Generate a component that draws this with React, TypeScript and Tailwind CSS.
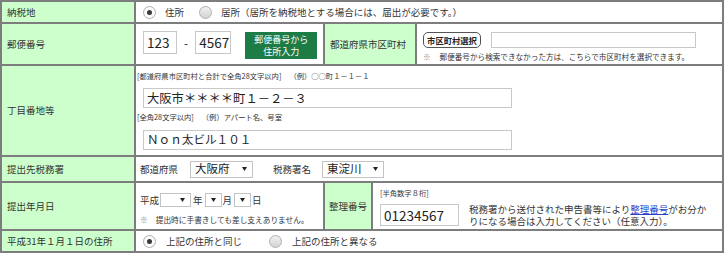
import React from 'react';

const line = 'border-[#7d7d7d]';

const Radio = ({ checked }: { checked?: boolean }) => (
	<span
		className={`flex h-[13px] w-[13px] shrink-0 items-center justify-center rounded-full border border-[#b0b0b0] ${
			checked ? 'bg-[#fbfbfb]' : 'bg-gradient-to-b from-[#f0f0f0] to-[#d4d4d4]'
		}`}
	>
		{checked && <span className="h-[5px] w-[5px] rounded-full bg-[#3a3a3a]" />}
	</span>
);

const Arrow = () => (
	<svg width="5" height="4" viewBox="0 0 5 4" className="shrink-0">
		<path d="M0 0h5L2.5 4z" fill="#222" />
	</svg>
);

const Select = ({ value, className }: { value?: string; className: string }) => (
	<div className={`flex items-center justify-between border border-[#c4c4c4] bg-white pr-[5px] ${className}`}>
		<span className="pl-[4px] text-[11.5px] leading-none text-[#222]">{value}</span>
		<Arrow />
	</div>
);

const Label = ({ children, w }: { children: React.ReactNode; w: string }) => (
	<div className={`flex shrink-0 items-center bg-[#ccffcc] pl-[5px] text-[9.5px]`}>
		<span className={w}>{children}</span>
	</div>
);

const Input = ({ value, className }: { value?: string; className: string }) => (
	<div className={`flex items-center border border-[#c8c8c8] bg-white pl-[3px] text-[#222] ${className}`}>{value}</div>
);

export default function App() {
	return (
		<div className="bg-white">
			<div className={`w-[724px] border-2 ${line} font-['Noto_Sans_CJK_JP',sans-serif] text-[#333]`}>
				{/* 納税地 */}
				<div className="flex h-[20px]">
					<Label w="w-[127px]">納税地</Label>
					<div className={`flex flex-1 items-center border-l-2 ${line} pl-[7px] text-[9.5px]`}>
						<Radio checked />
						<span className="ml-[9px]">住所</span>
						<span className="ml-[15px]">
							<Radio />
						</span>
						<span className="ml-[9px]">居所（居所を納税地とする場合には、届出が必要です。）</span>
					</div>
				</div>

				{/* 郵便番号 */}
				<div className={`flex h-[42px] border-t-2 ${line}`}>
					<Label w="w-[127px]">郵便番号</Label>
					<div className={`flex w-[189px] shrink-0 items-start border-l-2 ${line} pl-[7px] pt-[7px]`}>
						<Input value="123" className="h-[23px] w-[34px] text-[13.5px]" />
						<span className="mx-[7px] mt-[3px] text-[12px]">-</span>
						<Input value="4567" className="h-[23px] w-[36px] text-[13.5px]" />
						<div className="ml-[14px] mt-[1px] flex h-[27px] w-[72px] flex-col items-center justify-center bg-[#1d7b46] text-[9px] leading-[12px] text-white">
							<span>郵便番号から</span>
							<span>住所入力</span>
						</div>
					</div>
					<div className={`flex w-[92px] shrink-0 items-center border-l-2 ${line} bg-[#ccffcc] pl-[5px] text-[9.5px]`}>
						都道府県市区町村
					</div>
					<div className={`flex flex-1 flex-col border-l-2 ${line} pl-[6px] pt-[8px]`}>
						<div className="flex items-center">
							<div className="flex h-[16px] w-[58px] items-center justify-center rounded-[5px] border border-[#555] text-[8.3px] font-bold text-[#222]">
								市区町村選択
							</div>
							<Input className="ml-[10px] h-[16px] w-[205px]" />
						</div>
						<div className="mt-[4px] text-[7.6px] leading-[10px]">
							<span className="text-[#888]">※</span>
							<span className="ml-[9px]">郵便番号から検索できなかった方は、こちらで市区町村を選択できます。</span>
						</div>
					</div>
				</div>

				{/* 丁目番地等 */}
				<div className={`flex h-[91px] border-t-2 ${line}`}>
					<Label w="w-[127px]">丁目番地等</Label>
					<div className={`flex flex-1 flex-col border-l-2 ${line} pl-[7px] pt-[5px]`}>
						<div className="-ml-[6px] text-[7.3px] leading-[10px]">
							[都道府県市区町村と合計で全角28文字以内]<span className="ml-[8px]">（例）○○町１－１－１</span>
						</div>
						<Input value="大阪市＊＊＊＊町１－２－３" className="mt-[7px] h-[20px] w-[369px] text-[12.3px]" />
						<div className="-ml-[6px] mt-[4px] text-[7.3px] leading-[10px]">
							[全角28文字以内]<span className="ml-[8px]">（例）アパート名、号室</span>
						</div>
						<Input value="Ｎｏｎ太ビル１０１" className="mt-[8px] h-[20px] w-[369px] text-[11.6px]" />
					</div>
				</div>

				{/* 提出先税務署 */}
				<div className={`flex h-[26px] border-t-2 ${line}`}>
					<Label w="w-[127px]">提出先税務署</Label>
					<div className={`flex flex-1 items-center border-l-2 ${line} pl-[4px] text-[9.5px]`}>
						<span>都道府県</span>
						<Select value="大阪府" className="ml-[12px] h-[17px] w-[63px]" />
						<span className="ml-[20px]">税務署名</span>
						<Select value="東淀川" className="ml-[11px] h-[17px] w-[62px]" />
					</div>
				</div>

				{/* 提出年月日 */}
				<div className={`flex h-[48px] border-t-2 ${line}`}>
					<Label w="w-[127px]">提出年月日</Label>
					<div className={`flex w-[189px] shrink-0 flex-col border-l-2 ${line} pl-[4px] pt-[10px]`}>
						<div className="flex items-center text-[9.5px]">
							<span>平成</span>
							<Select className="ml-[1px] h-[14px] w-[31px]" />
							<span className="ml-[2px]">年</span>
							<Select className="ml-[2px] h-[14px] w-[17px]" />
							<span className="ml-[1px]">月</span>
							<Select className="ml-[2px] h-[14px] w-[17px]" />
							<span className="ml-[1px]">日</span>
						</div>
						<div className="mt-[8px] text-[7.7px] leading-[10px]">
							<span className="text-[#888]">※</span>
							<span className="ml-[8px]">提出時に手書きしても差し支えありません。</span>
						</div>
					</div>
					<div className={`flex w-[48px] shrink-0 items-center border-l-2 ${line} bg-[#ccffcc] pl-[4px] text-[9.5px]`}>
						整理番号
					</div>
					<div className={`flex flex-1 flex-col border-l-2 ${line} pl-[7px] pt-[5px]`}>
						<div className="text-[7.3px] leading-[10px]">[半角数字８桁]</div>
						<div className="mt-[5px] flex items-center">
							<Input value="01234567" className="h-[22px] w-[79px] text-[13.5px]" />
							<div className="ml-[10px] flex flex-col text-[9.5px] leading-[12px]">
								<div className="flex h-[12px]">
									<span>税務署から送付された申告書等により</span>
									<span className="text-[#2a3fc8] underline">整理番号</span>
									<span>がお分か</span>
								</div>
								<div className="h-[12px]">りになる場合は入力してください（任意入力）。</div>
							</div>
						</div>
					</div>
				</div>

				{/* 平成31年1月1日の住所 */}
				<div className={`flex h-[22px] border-t-2 ${line}`}>
					<Label w="w-[127px]">平成31年１月１日の住所</Label>
					<div className={`flex flex-1 items-center border-l-2 ${line} pl-[7px] text-[9.5px]`}>
						<Radio checked />
						<span className="ml-[10px]">上記の住所と同じ</span>
						<span className="ml-[27px]">
							<Radio />
						</span>
						<span className="ml-[10px]">上記の住所と異なる</span>
					</div>
				</div>
			</div>
		</div>
	);
}
